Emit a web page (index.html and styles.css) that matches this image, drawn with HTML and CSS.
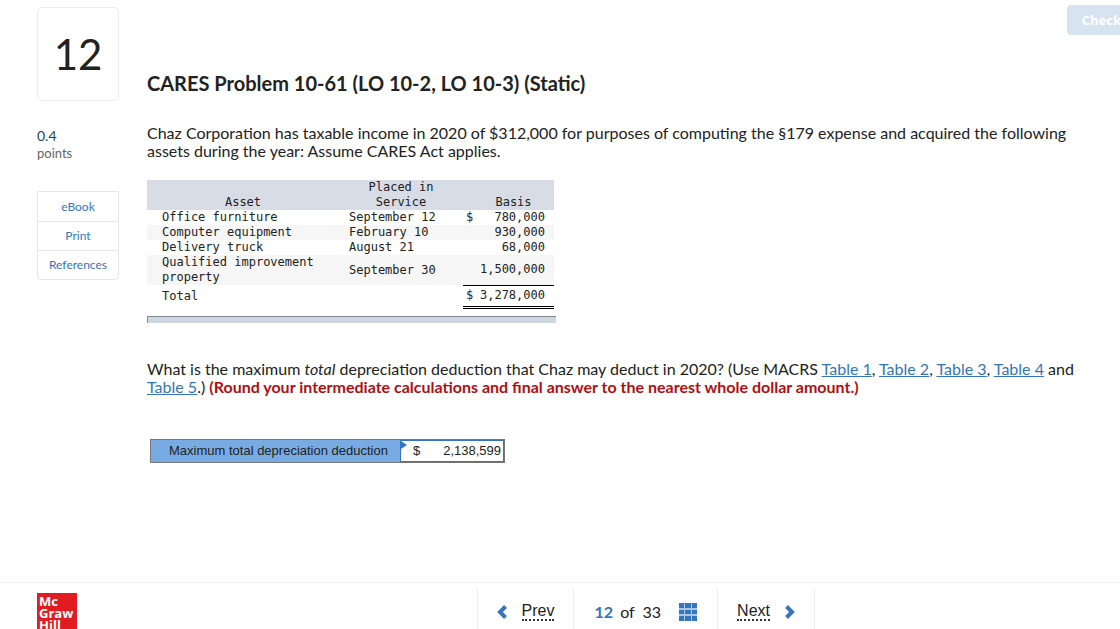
FILE: index.html
```html
<!DOCTYPE html>
<html lang="en">
<head>
  <meta charset="UTF-8">
  <meta name="viewport" content="width=device-width, initial-scale=1.0">
  <title>CARES Problem 10-61</title>
  <link rel="stylesheet" href="styles.css">
</head>
<body>

<div class="page">
  <aside class="sidebar">
    <div class="question-number">12</div>
    <div class="points">
      <span class="points-value">0.4</span>
      <span class="points-label">points</span>
    </div>
    <nav class="resources">
      <a href="#ebook">eBook</a>
      <a href="#print">Print</a>
      <a href="#references">References</a>
    </nav>
  </aside>

  <main class="content">
    <div class="toolbar">
      <button class="check-button" type="button">Check</button>
    </div>

    <h1>CARES Problem 10-61 (LO 10-2, LO 10-3) (Static)</h1>

    <p class="intro">Chaz Corporation has taxable income in 2020 of $312,000 for purposes of computing the §179 expense and acquired the following assets during the year: Assume CARES Act applies.</p>

    <div class="exhibit">
      <table class="assets">
        <colgroup>
          <col class="col-asset">
          <col class="col-date">
          <col class="col-basis">
        </colgroup>
        <thead>
          <tr>
            <th>Asset</th>
            <th>Placed in<br>Service</th>
            <th>Basis</th>
          </tr>
        </thead>
        <tbody>
          <tr>
            <td>Office furniture</td>
            <td>September 12</td>
            <td><div class="money"><span>$</span><span>780,000</span></div></td>
          </tr>
          <tr>
            <td>Computer equipment</td>
            <td>February 10</td>
            <td><div class="money"><span></span><span>930,000</span></div></td>
          </tr>
          <tr>
            <td>Delivery truck</td>
            <td>August 21</td>
            <td><div class="money"><span></span><span>68,000</span></div></td>
          </tr>
          <tr class="last-asset">
            <td>Qualified improvement<br>property</td>
            <td>September 30</td>
            <td><div class="money"><span></span><span>1,500,000</span></div></td>
          </tr>
        </tbody>
        <tfoot>
          <tr>
            <td>Total</td>
            <td></td>
            <td><div class="money"><span>$</span><span>3,278,000</span></div></td>
          </tr>
        </tfoot>
      </table>
      <div class="exhibit-bar"></div>
    </div>

    <p class="question">What is the maximum <em>total</em> depreciation deduction that Chaz may deduct in 2020? (Use MACRS <a href="#table1">Table 1</a>, <a href="#table2">Table 2</a>, <a href="#table3">Table 3</a>, <a href="#table4">Table 4</a> and <a href="#table5">Table 5</a>.) <strong>(Round your intermediate calculations and final answer to the nearest whole dollar amount.)</strong></p>

    <div class="answer">
      <label for="deduction">Maximum total depreciation deduction</label>
      <div class="answer-field">
        <svg class="marker" width="6" height="8" viewBox="0 0 6 8"><path d="M0 0L6 4L0 8Z" fill="#2f74bd"/></svg>
        <span>$</span>
        <input id="deduction" type="text" value="2,138,599">
      </div>
    </div>
  </main>
</div>

<footer class="footer">
  <a class="logo" href="#home">Mc<br>Graw<br>Hill</a>
  <nav class="pager">
    <a class="pager-item" href="#prev">
      <svg width="10" height="14" viewBox="0 0 10 14"><path d="M8.500 1.500L3 7L8.500 12.500" fill="none" stroke="#3475bb" stroke-width="4"/></svg>
      <span class="pager-text">Prev</span>
    </a>
    <div class="pager-item pager-count">
      <span><b>12</b> of &nbsp;33</span>
      <button class="grid-button" type="button" aria-label="Question list">
        <svg width="18" height="18" viewBox="0 0 18 18">
          <path d="M0 0h18v18H0z" fill="#a9c6e6"/>
          <path d="M0 0h5v5H0zM6 0h6v5H6zM13 0h5v5h-5zM0 7h5v4H0zM6 7h6v4H6zM13 7h5v4h-5zM0 13h5v5H0zM6 13h6v5H6zM13 13h5v5h-5z" fill="#3475bb"/>
        </svg>
      </button>
    </div>
    <a class="pager-item" href="#next">
      <span class="pager-text">Next</span>
      <svg width="10" height="14" viewBox="0 0 10 14"><path d="M1.500 1.500L7 7L1.500 12.500" fill="none" stroke="#3475bb" stroke-width="4"/></svg>
    </a>
  </nav>
</footer>

</body>
</html>
```
FILE: styles.css
```css
* {
  box-sizing: border-box;
}

body {
  margin: 0;
  height: 100vh;
  display: flex;
  flex-direction: column;
  overflow: hidden;
  font-family: Lato, sans-serif;
  font-size: 16px;
  line-height: 18px;
  color: #222;
  background-color: #fff;
}

a {
  color: #3475bb;
}

.page {
  flex: 1;
  min-height: 0;
  display: flex;
  gap: 28px;
  padding-left: 37px;
}

/* left column */
.sidebar {
  flex: none;
  width: 82px;
  padding-top: 7px;
}

.question-number {
  height: 94px;
  border: 1px solid #ececec;
  border-radius: 5px;
  font-size: 42px;
  line-height: 92px;
  text-align: center;
}

.points {
  display: flex;
  flex-direction: column;
  margin-top: 26px;
}

.points-value {
  font-size: 14px;
  color: #2b4268;
}

.points-label {
  font-size: 13px;
  line-height: 16px;
  color: #666;
}

.resources {
  margin-top: 30px;
  border: 1px solid #e6e6e6;
  border-radius: 0 0 5px 5px;
}

.resources a {
  display: block;
  font-size: 12px;
  line-height: 28px;
  text-align: center;
  text-decoration: none;
}

.resources a:first-child {
  line-height: 29px;
}

.resources a + a {
  border-top: 1px solid #e6e6e6;
}

/* problem */
.content {
  flex: 1;
  min-width: 0;
  padding-right: 40px;
}

.toolbar {
  display: flex;
  justify-content: flex-end;
  margin-right: -56px;
  padding-top: 5px;
}

.check-button {
  height: 30px;
  padding: 0 15px;
  border: none;
  border-radius: 4px;
  background-color: #d7e3f1;
  color: #fff;
  font-family: "Open Sans", sans-serif;
  font-size: 13px;
  font-weight: 700;
}

h1 {
  margin: 36px 0 0;
  font-size: 20px;
  line-height: 24px;
}

p {
  margin: 0;
}

.intro {
  margin-top: 29px;
}

.exhibit {
  width: 409px;
  margin-top: 20px;
}

.assets {
  width: 407px;
  table-layout: fixed;
  border-collapse: collapse;
  font-family: "DejaVu Sans Mono", monospace;
  font-size: 12px;
  line-height: 15px;
}

.col-asset {
  width: 192px;
}

.col-date {
  width: 124px;
}

.col-basis {
  width: 91px;
}

.assets th,
.assets td {
  padding: 0;
}

.assets th {
  font-weight: 400;
  vertical-align: bottom;
  background-color: #d8dce6;
}

.assets th:nth-child(3) {
  padding-left: 10px;
}

.assets td:first-child {
  padding-left: 15px;
}

.assets td:nth-child(2) {
  padding-left: 10px;
}

.assets tbody tr:nth-child(even) {
  background-color: #f6f6f6;
}

.money {
  display: flex;
  justify-content: space-between;
  padding: 0 9px 0 3px;
}

.last-asset td:nth-child(3) {
  border-bottom: 1px solid #000;
}

.assets tfoot td {
  height: 22px;
}

.assets tfoot td:nth-child(3) {
  border-bottom: 3px double #000;
}

.exhibit-bar {
  height: 7px;
  margin-top: 7px;
  border-top: 1px solid #808890;
  border-left: 1px solid #808890;
  background-color: #cfd5e1;
}

.question {
  margin-top: 37px;
}

.question strong {
  color: #b10e12;
}

/* answer row */
.answer {
  display: inline-flex;
  margin: 43px 0 0 3px;
  border: 1px solid #777;
  font-family: "Liberation Sans", Arial, sans-serif;
  font-size: 13px;
  line-height: 22px;
}

.answer label {
  width: 249px;
  padding-left: 18px;
  background-color: #78abe4;
}

.answer-field {
  position: relative;
  display: flex;
  width: 104px;
  padding-left: 12px;
  border: 1px solid #3475bb;
  line-height: 20px;
}

.answer-field input {
  flex: 1;
  min-width: 0;
  padding: 0 2px;
  border: none;
  outline: none;
  background: none;
  color: inherit;
  font: inherit;
  text-align: right;
}

.marker {
  position: absolute;
  top: 0;
  left: 0;
}

/* bottom bar */
.footer {
  flex: none;
  height: 47px;
  display: flex;
  align-items: flex-start;
  padding-left: 37px;
  border-top: 1px solid #eee;
  overflow: hidden;
}

.logo {
  width: 40px;
  height: 40px;
  margin-top: 10px;
  padding: 2px;
  background-color: #e21b22;
  color: #fff;
  font-family: "Open Sans", sans-serif;
  font-size: 13px;
  font-weight: 700;
  line-height: 12px;
  text-decoration: none;
}

.pager {
  display: flex;
  margin: 5px 305px 0 auto;
  border-left: 1px solid #eee;
}

.pager-item {
  display: flex;
  align-items: center;
  gap: 15px;
  height: 48px;
  padding: 0 19px;
  border-right: 1px solid #eee;
  color: #222;
  text-decoration: none;
}

.pager-text {
  font-family: "Liberation Sans", Arial, sans-serif;
  border-bottom: 2px dotted #333;
  line-height: 16px;
}

.pager-count {
  gap: 18px;
  padding: 0 20px;
}

.pager-count b {
  margin-right: 3px;
  color: #3475bb;
}

.grid-button {
  display: flex;
  padding: 0;
  border: none;
  background: none;
}
```
